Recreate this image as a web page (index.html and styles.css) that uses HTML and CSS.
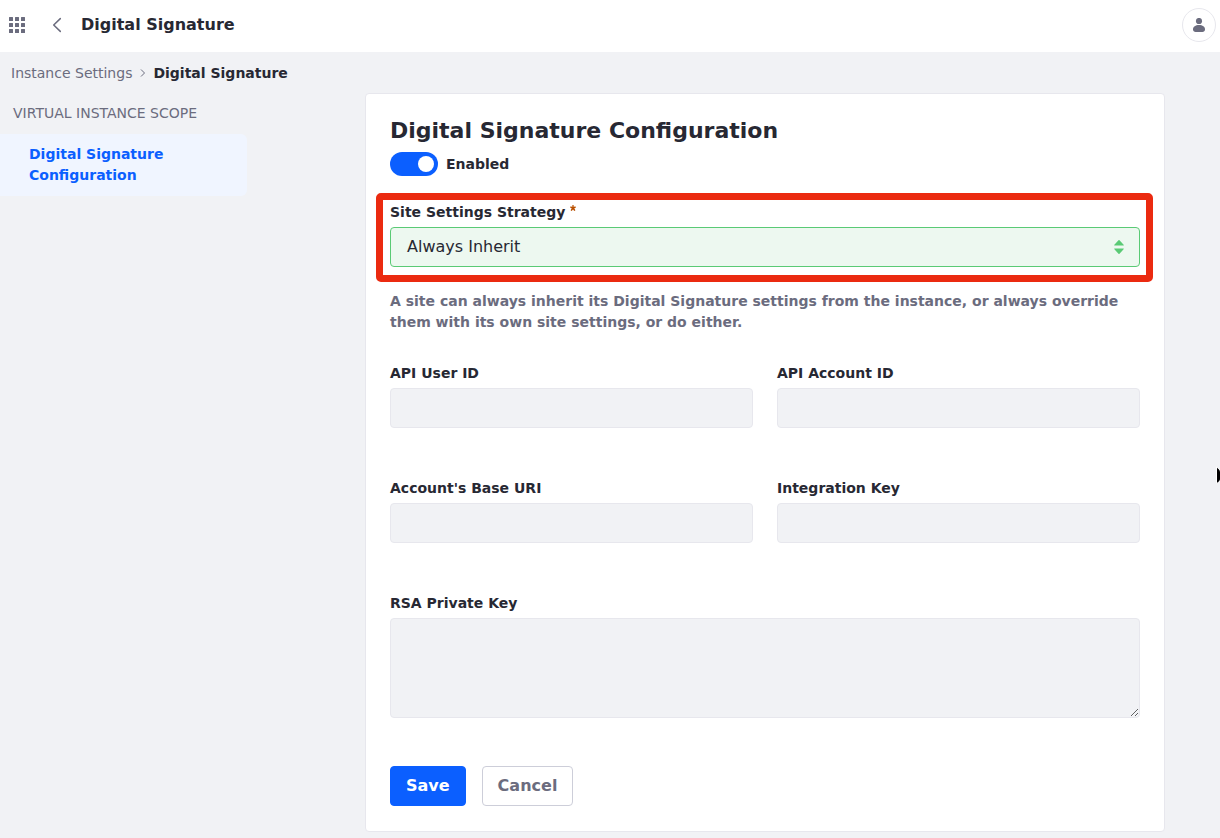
FILE: index.html
```html
<!DOCTYPE html>
<html lang="en">
<head>
<meta charset="utf-8">
<title>Digital Signature</title>
<link rel="stylesheet" href="styles.css">
</head>
<body>
<header class="topbar">
  <svg class="apps" width="16" height="16" viewBox="0 0 16 16" fill="currentColor"><rect width="4" height="4" rx=".2"/><rect x="6" width="4" height="4" rx=".2"/><rect x="12" width="4" height="4" rx=".2"/><rect y="6" width="4" height="4" rx=".2"/><rect x="6" y="6" width="4" height="4" rx=".2"/><rect x="12" y="6" width="4" height="4" rx=".2"/><rect y="12" width="4" height="4" rx=".2"/><rect x="6" y="12" width="4" height="4" rx=".2"/><rect x="12" y="12" width="4" height="4" rx=".2"/></svg>
  <svg class="back" width="16" height="16" viewBox="0 0 16 16" fill="none" stroke="currentColor" stroke-width="1.5" stroke-linecap="round" stroke-linejoin="round"><path d="M11.300 1.600 4.700 8l6.600 6.400"/></svg>
  <h1 class="page-title">Digital Signature</h1>
  <span class="avatar"><svg width="12" height="14" viewBox="0 0 12 14" fill="currentColor"><circle cx="6" cy="3" r="3.100"/><path d="M0 11.300C0 8.600 2.500 7 6 7s6 1.600 6 4.300C12 13.300 10.800 14 9.500 14h-7C1.200 14 0 13.300 0 11.300z"/></svg></span>
</header>
<nav class="crumbs"><span>Instance Settings</span><svg width="6" height="8" viewBox="0 0 6 8" fill="none" stroke="currentColor" stroke-width="1"><path d="M1 .5 4.500 4 1 7.500"/></svg><b>Digital Signature</b></nav>
<div class="layout">
  <aside class="sidebar">
    <div class="scope">VIRTUAL INSTANCE SCOPE</div>
    <a class="side-link">Digital Signature Configuration</a>
  </aside>
  <main class="sheet">
    <h2 class="sheet-title">Digital Signature Configuration</h2>
    <div class="toggle-row"><span class="toggle"></span><span>Enabled</span></div>
    <section class="strategy">
      <label class="label">Site Settings Strategy<svg class="star" width="6" height="6" viewBox="0 0 6 6" fill="currentColor"><path d="M2.400 0h1.200v1.700l2-.3.4 1.100-1.700.8 1.100 1.900-1.100.8L3 4.600 1.700 6 .6 5.200l1.100-1.900L0 2.500l.4-1.100 2 .3z"/></svg></label>
      <div class="select"><span>Always Inherit</span><svg width="10" height="14" viewBox="0 0 10 14" fill="currentColor"><path d="M.3 5.600Q0 5 .6 4.500L4.500.3Q5 -.1 5.500.3l3.900 4.200Q10 5 9.700 5.600zM.3 8.400h9.400Q10 9 9.400 9.500l-3.900 4.200Q5 14.100 4.500 13.700L.6 9.500Q0 9 .3 8.400z"/></svg></div>
    </section>
    <p class="help">A site can always inherit its Digital Signature settings from the instance, or always override them with its own site settings, or do either.</p>
    <div class="fields">
      <div><label class="label">API User ID</label><input class="input" disabled></div>
      <div><label class="label">API Account ID</label><input class="input" disabled></div>
      <div><label class="label">Account's Base URI</label><input class="input" disabled></div>
      <div><label class="label">Integration Key</label><input class="input" disabled></div>
      <div class="wide"><label class="label">RSA Private Key</label><textarea class="input area"></textarea></div>
    </div>
    <div class="actions"><button class="btn primary">Save</button><button class="btn">Cancel</button></div>
  </main>
</div>
<svg class="cursor" width="4" height="20" viewBox="0 0 4 20"><path d="M.5 .8v17L4 15V4z" stroke="#fff"/><path d="M1 2.500v13.500L4 13.500V5.500z"/></svg>
</body>
</html>
```
FILE: styles.css
```css
* { box-sizing: border-box; }
body { margin: 0; height: 838px; overflow: hidden; position: relative; background: #f1f2f5; color: #272833; font: 14px/21px "DejaVu Sans", sans-serif; }
svg { display: block; flex: none; }
h1, h2, p { margin: 0; }
.topbar { height: 52px; padding: 0 4px 2px 9px; background: #fff; display: flex; align-items: center; color: #6b6c7e; }
.back { margin-left: 24px; }
.page-title { margin-left: 16px; font-size: 16px; line-height: 24px; color: #272833; }
.avatar { margin-left: auto; width: 34px; height: 34px; border: 1px solid #e7e7ed; border-radius: 50%; display: flex; align-items: center; justify-content: center; }
.crumbs { height: 41px; padding: 1px 0 0 11px; display: flex; align-items: center; color: #6b6c7e; }
.crumbs svg { margin: 0 7px 1px 8px; }
.crumbs b { color: #272833; }
.layout { display: flex; }
.sidebar { width: 365px; padding-top: 10px; }
.scope { padding-left: 13px; color: #6b6c7e; }
.side-link { display: block; width: 247px; height: 62px; margin-top: 10px; padding: 10px 60px 10px 29px; background: #f0f5ff; border-radius: 0 6px 6px 0; color: #0b5fff; font-weight: 700; }
.sheet { width: 800px; height: 739px; padding: 24px 24px 0; background: #fff; border: 1px solid #e7e7ed; border-radius: 4px; }
.sheet-title { font-size: 22px; line-height: 26px; }
.toggle-row { display: flex; align-items: center; gap: 8px; height: 24px; margin-top: 8px; font-weight: 700; }
.toggle { width: 48px; height: 24px; border-radius: 12px; background: #0b5fff; padding: 4px; }
.toggle::after { content: ""; display: block; width: 16px; height: 16px; margin-left: 24px; background: #fff; border-radius: 50%; }
.strategy { margin: 17px -13px 0 -14px; height: 89px; border: 7px solid #eb2a10; border-radius: 5px; padding: 2px 6px 0 7px; }
.label { display: flex; height: 21px; font-weight: 700; margin-bottom: 4px; }
.star { color: #b95000; margin: 3px 0 0 5px; }
.select { height: 40px; border: 1px solid #5aca75; border-radius: 4px; background: #edf8f0; display: flex; align-items: center; justify-content: space-between; padding: 0 15px 0 16px; font-size: 16px; color: #272833; }
.select span { padding-bottom: 2px; }
.select svg { color: #5aca75; }
.help { margin-top: 9px; color: #6b6c7e; font-weight: 700; }
.fields { margin-top: 30px; display: grid; grid-template-columns: 1fr 1fr; column-gap: 24px; row-gap: 50px; }
.wide { grid-column: 1 / 3; }
.input { display: block; width: 100%; height: 40px; background: #f1f2f5; border: 1px solid #e7e7ed; border-radius: 4px; }
.area { height: 100px; outline: 0; resize: vertical; }
.actions { margin-top: 48px; display: flex; gap: 16px; }
.btn { height: 40px; padding: 0 15px; border: 1px solid #cdced9; border-radius: 4px; background: #fff; color: #6b6c7e; font: 700 16px/24px "DejaVu Sans", sans-serif; }
.primary { background: #0b5fff; border-color: #0b5fff; color: #fff; }
.cursor { position: absolute; right: 0; top: 466px; }
```
